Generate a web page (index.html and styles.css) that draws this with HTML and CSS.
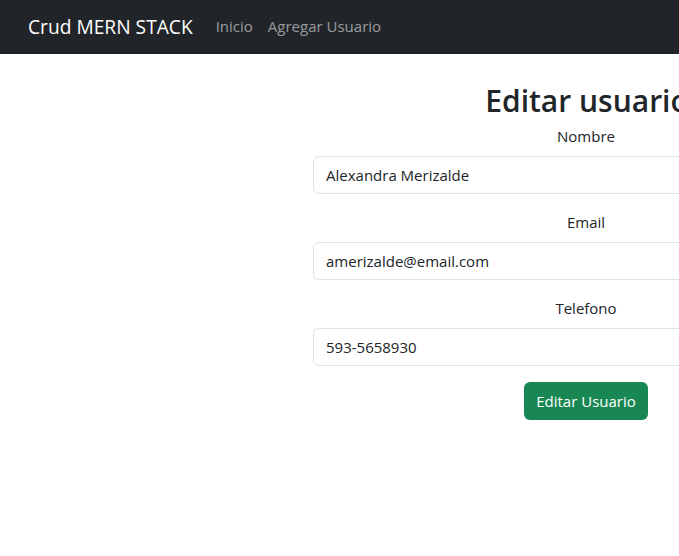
FILE: index.html
```html
<!DOCTYPE html>
<html lang="es">
<head>
<meta charset="utf-8">
<title>Crud MERN STACK</title>
<link rel="stylesheet" href="styles.css">
</head>
<body>
<nav class="navbar">
  <a class="brand" href="#">Crud MERN STACK</a>
  <ul class="nav-links">
    <li><a href="#">Inicio</a></li>
    <li><a href="#">Agregar Usuario</a></li>
  </ul>
</nav>
<main class="page">
  <form class="form">
    <h1 class="title">Editar usuario</h1>
    <label class="label" for="nombre">Nombre</label>
    <input class="input" id="nombre" type="text" value="Alexandra Merizalde">
    <label class="label" for="email">Email</label>
    <input class="input" id="email" type="email" value="amerizalde@email.com">
    <label class="label" for="telefono">Telefono</label>
    <input class="input" id="telefono" type="text" value="593-5658930">
    <button class="btn" type="button">Editar Usuario</button>
  </form>
</main>
</body>
</html>
```

FILE: styles.css
```css
html, body {
  margin: 0;
  padding: 0;
  overflow: hidden;
}
body {
  font-family: "Open Sans", "Noto Sans", sans-serif;
  font-size: 15px;
  color: #212529;
  background: #fff;
  width: 679px;
}
.navbar {
  display: flex;
  align-items: center;
  height: 54px;
  background: #212529;
  padding: 0 0 2px 28px;
  box-sizing: border-box;
}
.brand {
  color: #fff;
  text-decoration: none;
  font-size: 19.2px;
  margin-right: 23px;
}
.nav-links {
  display: flex;
  list-style: none;
  margin: 0;
  padding: 0;
  gap: 15px;
}
.nav-links a {
  color: rgba(255,255,255,.55);
  text-decoration: none;
  font-size: 15px;
}
.page {
  display: flex;
  padding-left: 313px;
}
.form {
  flex: 0 0 546px;
  width: 546px;
  display: flex;
  flex-direction: column;
  align-items: center;
}
.title {
  font-size: 30px;
  font-weight: 600;
  line-height: 38px;
  margin: 28px 0 4px;
  padding-left: 2px;
}
.label {
  line-height: 24px;
  margin-bottom: 8px;
}
.input {
  box-sizing: border-box;
  width: 100%;
  height: 38px;
  border: 1px solid #dee2e6;
  border-radius: 6px;
  padding: 6px 12px;
  font-family: inherit;
  font-size: 15px;
  color: #212529;
  margin-bottom: 16px;
}
.btn {
  height: 38px;
  padding: 0 12px;
  border: none;
  border-radius: 6px;
  background: #198754;
  color: #fff;
  font-family: inherit;
  font-size: 15px;
}
```
